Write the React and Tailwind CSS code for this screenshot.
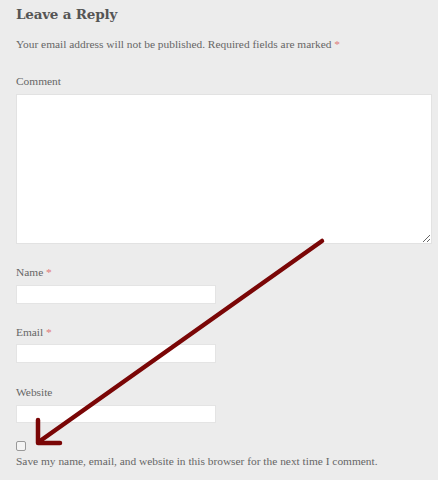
export default function App() {
  return (
    <div className="relative w-[438px] h-[480px] overflow-hidden bg-[#ececec] text-[#666] [font-family:'Liberation_Serif',serif]">
      <div className="flex flex-col items-start px-4 pt-[4px]">
        <h3 className="text-[13.5px] font-bold text-[#555] leading-5 [font-family:'DejaVu_Serif',serif] tracking-[-0.2px]">
          Leave a Reply
        </h3>
        <p className="mt-[12px] text-[11.4px] leading-4">
          Your email address will not be published. Required fields are marked{" "}
          <span className="text-[#e07a7a]">*</span>
        </p>

        <label className="mt-[21px] text-[11.4px] leading-4">Comment</label>
        <textarea className="mt-[5px] w-[416px] h-[150px] bg-white border border-[#e2e2e2] outline-none" />

        <label className="mt-[20px] text-[11.4px] leading-4">
          Name <span className="text-[#e07a7a]">*</span>
        </label>
        <input className="mt-[5px] w-[200px] h-[19px] bg-white border border-[#e4e4e4] outline-none" />

        <label className="mt-[20px] text-[11.4px] leading-4">
          Email <span className="text-[#e07a7a]">*</span>
        </label>
        <input className="mt-[4px] w-[200px] h-[19px] bg-white border border-[#e4e4e4] outline-none" />

        <label className="mt-[21px] text-[11.4px] leading-4">Website</label>
        <input className="mt-[5px] w-[200px] h-[18px] bg-white border border-[#e4e4e4] outline-none" />

        <div className="mt-[18px] w-[10px] h-[10px] rounded-[2px] border border-[#999] bg-[#f4f4f4]" />
        <p className="mt-[2px] text-[11.4px] leading-4">
          Save my name, email, and website in this browser for the next time I comment.
        </p>
      </div>

      <svg className="absolute inset-0 pointer-events-none" width="438" height="480" viewBox="0 0 438 480">
        <g stroke="#7a0606" strokeWidth="4.5" strokeLinecap="round" strokeLinejoin="round" fill="none">
          <path d="M322 241 L40 441" />
          <path d="M38 420 L38 443 L60 443" />
        </g>
      </svg>
    </div>
  );
}
